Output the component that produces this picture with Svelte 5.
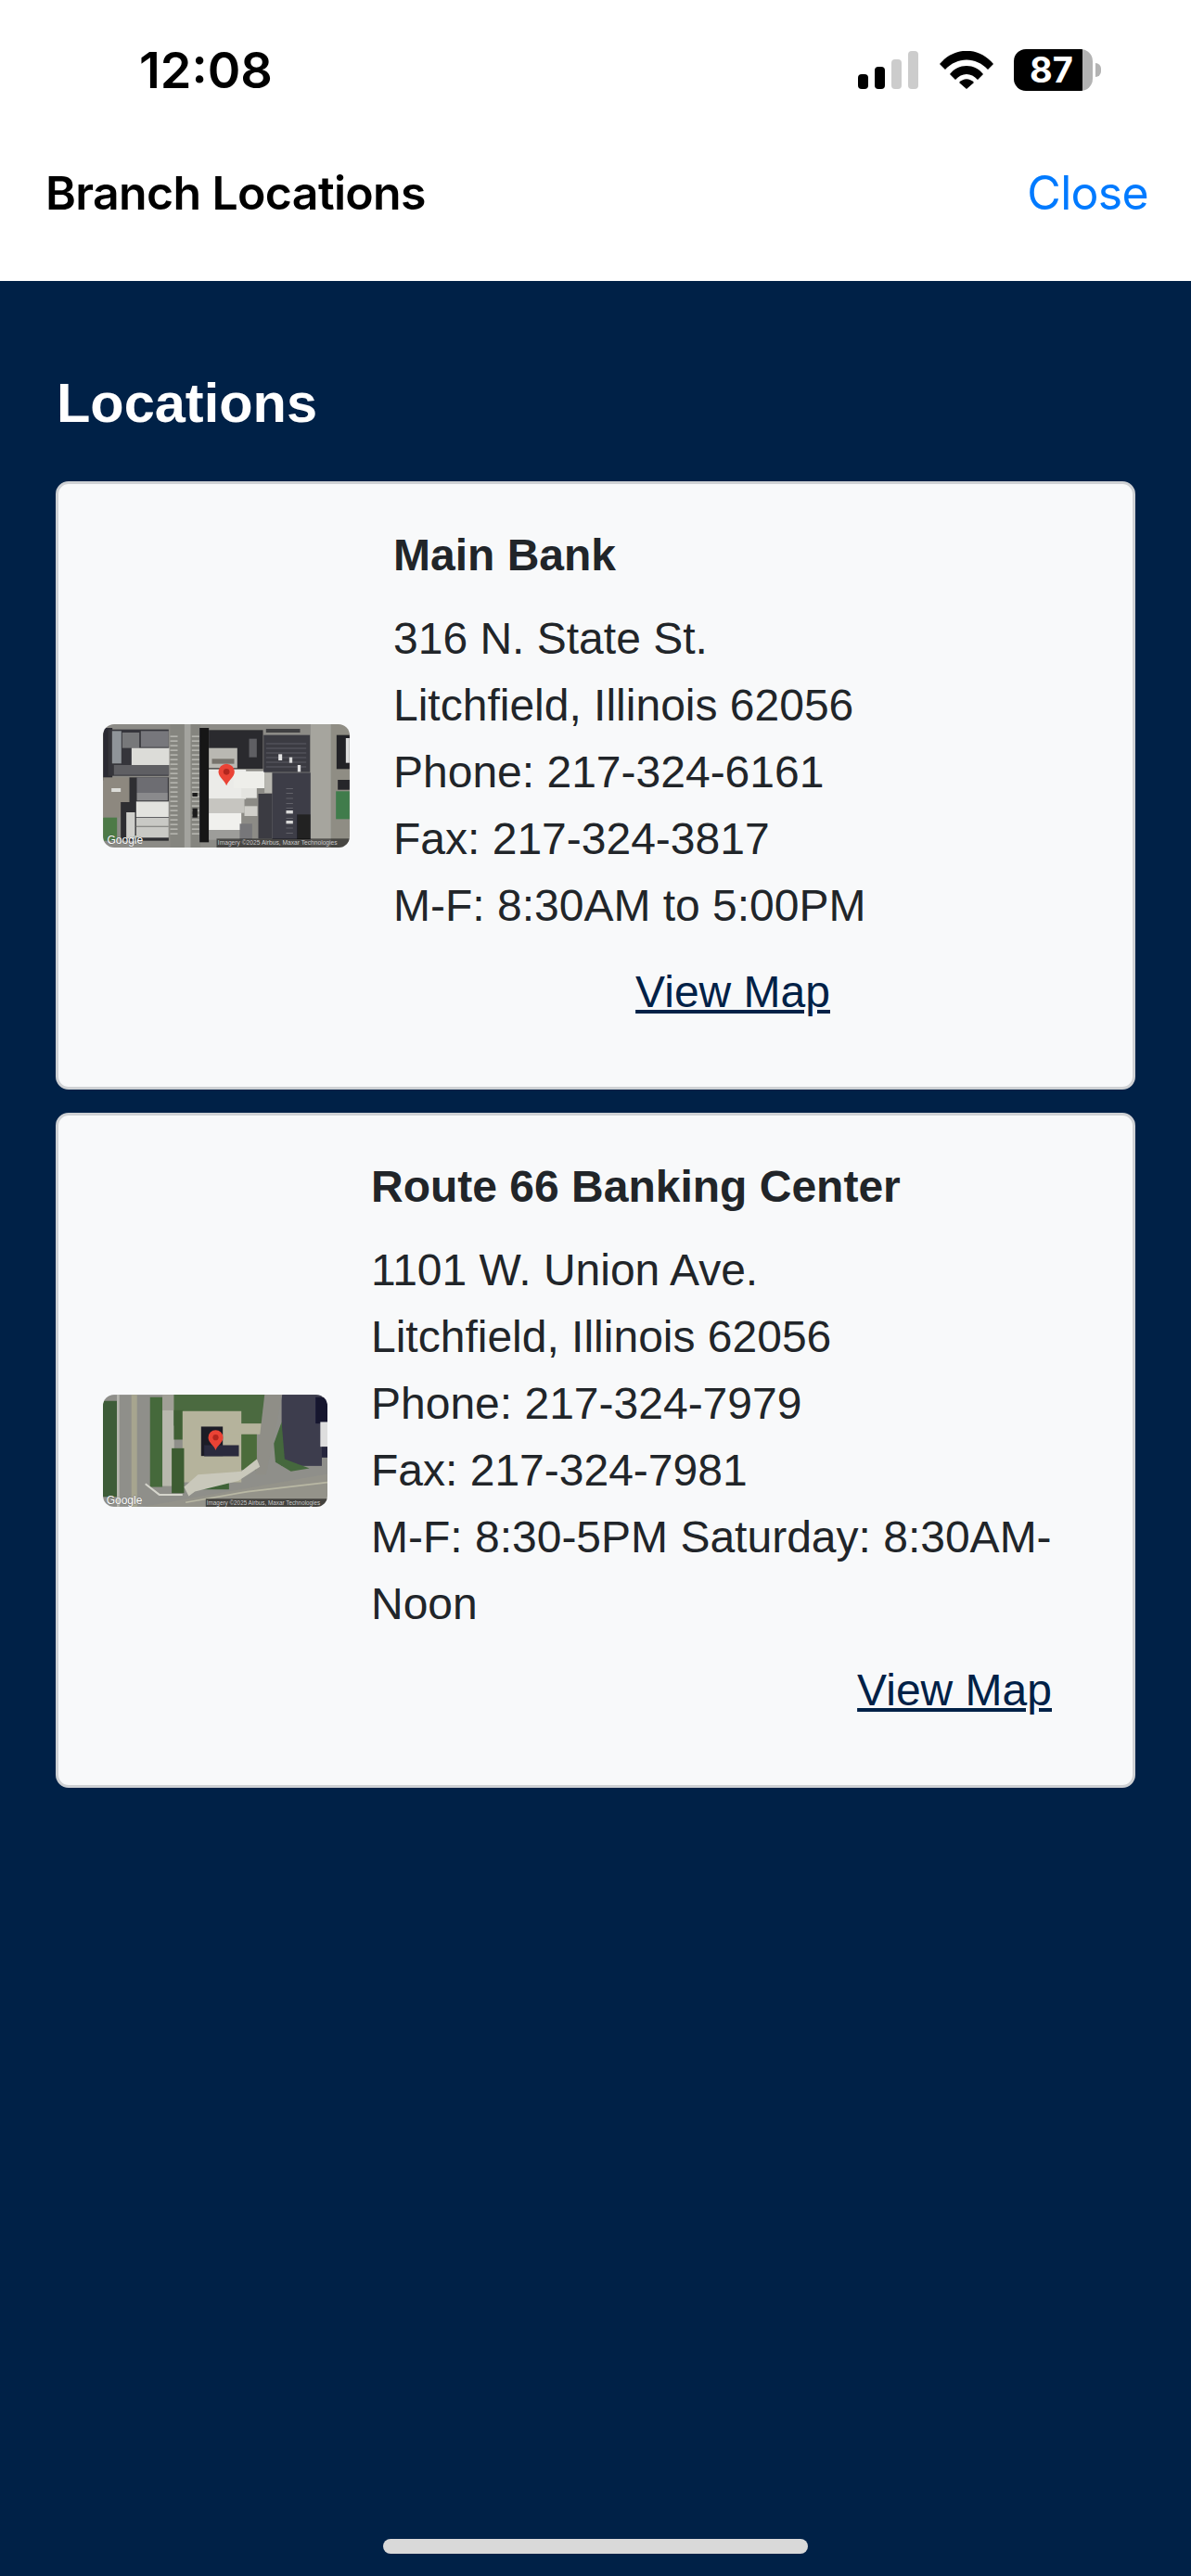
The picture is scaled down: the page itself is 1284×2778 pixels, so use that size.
<script>
  // map pieces are [x, y, w, h, fill], in a thumbnail's own viewBox units
  const stripes = (x, top, count, step, w, h, fill) =>
    Array.from({ length: count }, (_, i) => [x, top + i * step, w, h, fill])

  const mainMap = [
    [33, 33, 797, 399, "#8c8b86"],
    [33, 45, 30, 170, "#2c2c30"],
    [50, 50, 195, 150, "#35353a"],
    [62, 55, 30, 105, "#8f9499"],
    [95, 60, 55, 50, "#77787a"],
    [155, 55, 90, 52, "#77777b"],
    [125, 110, 122, 55, "#dcdcd8"],
    [68, 165, 178, 32, "#5f5f63"],
    [33, 205, 100, 130, "#8d887f"],
    [60, 240, 30, 12, "#dcdcd8"],
    [118, 205, 127, 80, "#2f2f33"],
    [142, 205, 100, 50, "#6d6d72"],
    [142, 255, 100, 25, "#8a8a8c"],
    [90, 285, 155, 125, "#2d2d30"],
    [140, 283, 105, 50, "#e3e3df"],
    [140, 335, 105, 65, "#c9c9c5"],
    [140, 362, 105, 4, "#8b8b88"],
    [108, 318, 28, 85, "#cfcfcb"],
    [33, 335, 45, 75, "#4d7a46"],
    [250, 33, 98, 399, "#85857f"],
    [296, 33, 20, 399, "#a3a39e"],
    ...stripes(250, 70, 22, 15, 24, 5, "#b3b3ad"),
    ...stripes(320, 70, 22, 15, 24, 5, "#b3b3ad"),
    [345, 45, 30, 370, "#161618"],
    [375, 52, 175, 125, "#29292d"],
    [375, 110, 92, 65, "#b9b8b2"],
    [385, 145, 72, 16, "#77736c"],
    [505, 80, 25, 60, "#5f5f63"],
    [375, 180, 120, 95, "#ebebe8"],
    [455, 185, 100, 55, "#eeeeea"],
    [480, 240, 50, 32, "#e4e4e0"],
    [555, 190, 25, 65, "#b7b6b0"],
    [375, 275, 115, 45, "#c6c5c0"],
    [490, 298, 42, 32, "#d0cfca"],
    [375, 320, 105, 55, "#f0f0ed"],
    [375, 375, 100, 32, "#9d9d9a"],
    [552, 68, 150, 120, "#3b3b43"],
    [580, 190, 125, 215, "#3e3e47"],
    [535, 258, 45, 145, "#3a3a42"],
    [660, 325, 50, 80, "#202024"],
    [475, 355, 40, 50, "#77777a"],
    ...stripes(560, 95, 6, 15, 130, 2, "#6c6c72"),
    ...stripes(625, 240, 10, 16, 22, 2, "#77777d"),
    [704, 33, 66, 399, "#a6a59e"],
    [770, 33, 60, 399, "#8f8d84"],
    [788, 68, 42, 110, "#232326"],
    [818, 78, 12, 80, "#dddddd"],
    [792, 213, 38, 32, "#26262a"],
    [786, 250, 44, 90, "#3f7c4b"],
    [560, 48, 110, 12, "#3f3f42"],
    [600, 130, 12, 20, "#e4e4e4"],
    [635, 140, 10, 18, "#d8d8d8"],
    [662, 165, 10, 22, "#e0e0e0"],
    [625, 312, 22, 10, "#d8d8d8"],
    [625, 345, 22, 10, "#d8d8d8"],
    [322, 255, 16, 12, "#1c1c1c"],
    [322, 305, 16, 30, "#1c1c1c"]
  ]

  const routeMap = [
    [33, 42, 725, 362, "#8f8f8a"],
    [33, 62, 45, 310, "#3e5c37"],
    [78, 42, 8, 362, "#b7b7b0"],
    [125, 42, 18, 362, "#a7a58f"],
    [185, 50, 40, 290, "#45693b"],
    [225, 42, 42, 50, "#a09f96"],
    [225, 92, 38, 245, "#b8b8ad"],
    [262, 42, 295, 100, "#4b6b40"],
    [262, 92, 30, 95, "#3f6135"],
    [290, 95, 190, 230, "#b5b39c"],
    [440, 135, 105, 35, "#b5b39c"],
    [255, 215, 40, 145, "#3c5c31"],
    [480, 170, 50, 115, "#4b6c3b"],
    [340, 318, 100, 30, "#3f6439"],
    [350, 145, 70, 95, "#1b1b28"],
    [360, 205, 112, 36, "#2b2b3e"],
    [610, 42, 130, 230, "#3c3c4e"],
    [720, 50, 38, 85, "#14142e"],
    [735, 130, 23, 80, "#dedede"],
    [740, 210, 18, 35, "#26263c"]
  ]

  const branches = [
    {
      name: "Main Bank",
      lines: ["316 N. State St.", "Litchfield, Illinois 62056", "Phone: 217-324-6161", "Fax: 217-324-3817", "M-F: 8:30AM to 5:00PM"],
      kind: "main"
    },
    {
      name: "Route 66 Banking Center",
      lines: ["1101 W. Union Ave.", "Litchfield, Illinois 62056", "Phone: 217-324-7979", "Fax: 217-324-7981", "M-F: 8:30-5PM Saturday: 8:30AM-Noon"],
      kind: "route"
    }
  ]
</script>

{#snippet pin(x, y, s)}
  <g transform="translate({x} {y}) scale({s})">
    <path d="M0 45C-6 27-26 18-26 0a26 26 0 0 1 52 0C26 18 6 27 0 45z" fill="#ea4335" />
    <circle r="10" fill="#b3261e" />
  </g>
{/snippet}

{#snippet rects(list)}
  {#each list as [x, y, w, h, fill]}
    <rect {x} {y} width={w} height={h} {fill} />
  {/each}
{/snippet}

<div class="page">
  <div class="status">
    <span class="time">12:08</span>
    <div class="status-icons">
      <svg class="signal" width="65" height="41" viewBox="0 0 65 41">
        <rect x="0" y="25" width="11" height="16" rx="4" fill="#000" />
        <rect x="18" y="17" width="11" height="24" rx="4" fill="#000" />
        <rect x="36" y="9" width="11" height="32" rx="4" fill="#ccc" />
        <rect x="54" y="0" width="11" height="41" rx="4" fill="#ccc" />
      </svg>
      <svg class="wifi" width="58" height="41" viewBox="0 0 58 41">
        <path d="M0 14C16-5 42-5 58 14l-6 6C39 6 19 6 6 20z" fill="#000" />
        <path d="M11 25C20 13 38 13 47 25l-6 6C34 23 24 23 17 31z" fill="#000" />
        <path d="M21 34c5-5 11-5 16 0l-8 7z" fill="#000" />
      </svg>
      <div class="battery">
        <div class="battery-body"><span>87</span></div>
        <div class="battery-nub"></div>
      </div>
    </div>
  </div>

  <header class="topbar">
    <span class="topbar-title">Branch Locations</span>
    <span class="close">Close</span>
  </header>

  <main class="content">
    <h1>Locations</h1>
    {#each branches as branch}
      <section class="card {branch.kind}">
        <div class="thumb">
          {#if branch.kind === "main"}
            <svg viewBox="33 33 797 399" width="266" height="133">
              <g filter="url(#soft)">
                {@render rects(mainMap)}
              </g>
              <rect x="400" y="403" width="430" height="29" fill="#000" opacity="0.5" />
              <text x="404" y="424" class="credit main-credit">Imagery ©2025 Airbus, Maxar Technologies</text>
              <text x="46" y="421" class="google">Google</text>
              {@render pin(432, 187, 1)}
            </svg>
          {:else}
            <svg viewBox="33 42 725 362" width="242" height="121">
              <g filter="url(#soft)">
                {@render rects(routeMap)}
                <polygon points="555,42 612,42 560,300 525,300" fill="#8f8e87" />
                <polygon points="160,404 758,298 758,404" fill="#94938a" />
                <polygon points="585,200 610,130 620,250 700,280 640,290 590,260" fill="#44683c" />
                <polygon points="295,340 340,300 480,290 530,250 540,275 470,320 330,355 310,370" fill="#c9c8bb" />
                <polyline points="300,390 500,355 758,325" fill="none" stroke="#b9b8a4" stroke-width="5" />
                <polyline points="170,330 215,365 290,365" fill="none" stroke="#d5d5cc" stroke-width="6" />
              </g>
              <rect x="365" y="378" width="393" height="26" fill="#000" opacity="0.55" />
              <text x="368" y="397" class="credit route-credit">Imagery ©2025 Airbus, Maxar Technologies</text>
              <text x="44" y="394" class="google">Google</text>
              {@render pin(397, 180, 0.92)}
            </svg>
          {/if}
        </div>
        <div class="info">
          <h2>{branch.name}</h2>
          {#each branch.lines as line}
            <p>{line}</p>
          {/each}
          <div class="link-row"><span class="view-map">View Map</span></div>
        </div>
      </section>
    {/each}
  </main>

  <div class="home-bar"></div>

  <svg class="defs" width="0" height="0">
    <filter id="soft"><feGaussianBlur stdDeviation="1.8" /></filter>
  </svg>
</div>

<style>
  :global(body) {
    margin: 0;
    background: #002147;
  }

  .page {
    position: relative;
    height: 2778px;
    display: flex;
    flex-direction: column;
    font-family: "Liberation Sans", Arial, sans-serif;
    background: #002147;
    color: #212529;
  }

  .status {
    background: #fff;
    height: 120px;
    box-sizing: border-box;
    padding: 49px 97px 0 150px;
    display: flex;
    justify-content: space-between;
    align-items: flex-start;
  }

  .time {
    font-family: Inter, "Liberation Sans", sans-serif;
    font-size: 54px;
    font-weight: 600;
    line-height: 54px;
    color: #000;
  }

  .status-icons {
    display: flex;
    align-items: flex-start;
    padding-top: 6px;
  }

  .signal {
    margin-right: 23px;
  }

  .wifi {
    margin-right: 22px;
  }

  .battery {
    display: flex;
    align-items: center;
    margin-top: -2px;
  }

  .battery-body {
    width: 85px;
    height: 45px;
    border-radius: 13px;
    background: linear-gradient(to right, #000 74px, #b3b3b3 74px);
    color: #fff;
    font-family: Inter, "Liberation Sans", sans-serif;
    font-size: 38px;
    font-weight: 700;
    line-height: 45px;
    box-sizing: border-box;
    padding-left: 17px;
  }

  .battery-nub {
    width: 6px;
    height: 15px;
    margin-left: 3px;
    border-radius: 0 8px 8px 0;
    background: #b3b3b3;
  }

  .topbar {
    background: #fff;
    height: 183px;
    box-sizing: border-box;
    padding: 58px 46px 0 49px;
    display: flex;
    justify-content: space-between;
    align-items: flex-start;
    font-family: Inter, "Liberation Sans", sans-serif;
    font-size: 50px;
    line-height: 60px;
  }

  .topbar-title {
    color: #000;
    font-weight: 600;
    letter-spacing: -0.65px;
  }

  .close {
    color: #007aff;
    letter-spacing: -0.7px;
  }

  .content {
    padding: 0 60px;
  }

  h1 {
    margin: 0;
    padding: 97px 0 0 1px;
    height: 119px;
    color: #fff;
    font-size: 59.5px;
    font-weight: 700;
    line-height: 70px;
  }

  .card {
    display: flex;
    align-items: center;
    box-sizing: border-box;
    background: #f8f9fa;
    border: 3px solid #cfd1d4;
    border-radius: 14px;
    padding: 0 80px 0 48px;
    margin-bottom: 25px;
  }

  .card.main {
    height: 656px;
  }

  .card.route {
    height: 728px;
  }

  .thumb {
    flex: none;
    margin-right: 47px;
    border-radius: 12px;
    overflow: hidden;
    line-height: 0;
  }

  .info {
    flex: 1;
    min-width: 0;
    padding-bottom: 19px;
    font-size: 48px;
    line-height: 72px;
  }

  h2 {
    margin: 0 0 25px;
    font-size: 48px;
    font-weight: 700;
    line-height: 58px;
  }

  p {
    margin: 0;
  }

  .link-row {
    display: flex;
    justify-content: flex-end;
    margin-top: 21px;
    padding-right: 7px;
  }

  .main .link-row {
    padding-right: 246px;
  }

  .view-map {
    color: #002147;
    text-decoration: underline;
  }

  .credit {
    font-family: "Liberation Sans", Arial, sans-serif;
    fill: #c9c9c9;
  }

  .main-credit {
    font-size: 20px;
  }

  .route-credit {
    font-size: 19px;
  }

  .google {
    font-family: "Liberation Sans", Arial, sans-serif;
    font-size: 36px;
    fill: #fff;
    stroke: #333;
    stroke-width: 1;
    paint-order: stroke;
  }

  .home-bar {
    position: absolute;
    left: 413px;
    top: 2738px;
    width: 458px;
    height: 16px;
    border-radius: 8px;
    background: #d9d9d9;
  }

  .defs {
    position: absolute;
  }
</style>
